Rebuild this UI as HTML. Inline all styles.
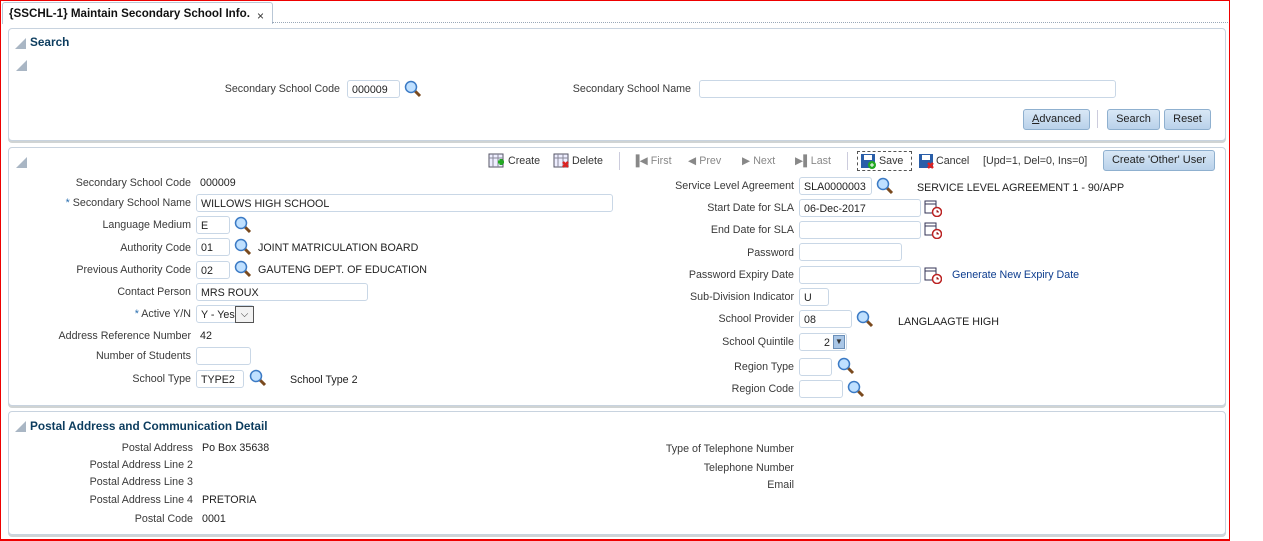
<!DOCTYPE html>
<html><head><meta charset="utf-8">
<style>
*{margin:0;padding:0;box-sizing:border-box}
body{width:1263px;height:541px;background:#fff;position:relative;overflow:hidden;font-family:"Liberation Sans",Tahoma,sans-serif;font-size:10.7px;color:#333}
.a{position:absolute;white-space:nowrap;line-height:16px}
.l{position:absolute;white-space:nowrap;line-height:16px;text-align:right;color:#3a3a3a}
.v{position:absolute;white-space:nowrap;line-height:16px;color:#222}
.in{position:absolute;height:18px;border:1px solid #c9d7e6;border-radius:3px;background:#fff;padding:2px 4px;line-height:14px;color:#222;white-space:nowrap;overflow:hidden}
.panel{position:absolute;border:1px solid #c8d3df;border-radius:4px;background:#fff;box-shadow:0 2px 0 #d0d4d4}
.tri{position:absolute;width:0;height:0;border-left:11px solid transparent;border-bottom:11px solid #a9b6c4}
.h{position:absolute;font-weight:bold;color:#0c3c5e;font-size:11.8px;line-height:16px}
.btn{position:absolute;height:21px;border:1px solid #8fb0cf;border-radius:3px;background:linear-gradient(#d9e8f6,#b9d1ea);text-align:center;line-height:19px;color:#222;font-size:11px}
.dis{color:#888}
.req{color:#2a6fb0}
</style></head><body>
<div style="position:absolute;left:0;top:0;width:1230px;height:541px;border:1px solid #e00;border-bottom:2px solid #e00"></div>
<div style="position:absolute;left:2px;top:2px;width:271px;height:22px;border:1px solid #b9c7d6;border-bottom:none;border-radius:3px 3px 0 0;background:#fff"></div>
<div style="position:absolute;left:272px;top:22px;width:956px;border-top:1px dotted #9aa8b8"></div>
<div class="a" style="left:9px;top:6px;font-weight:bold;font-size:11.6px;color:#111">{SSCHL-1} Maintain Secondary School Info.</div>
<div class="a" style="left:257px;top:8px;font-size:12px;color:#333">×</div>

<div class="panel" style="left:8px;top:28px;width:1218px;height:113px"></div>
<div class="tri" style="left:15px;top:38px"></div>
<div class="h" style="left:30px;top:34px">Search</div>
<div class="tri" style="left:16px;top:60px"></div>
<div class="l" style="right:923px;top:81px">Secondary School Code</div>
<div class="in" style="left:347px;top:80px;width:53px">000009</div>
<svg class="a" style="left:404px;top:80px" width="18" height="18" viewBox="0 0 18 18"><line x1="10" y1="10" x2="16" y2="16" stroke="#7a4a1e" stroke-width="3"/><circle cx="7" cy="7" r="5.5" fill="#bfe0ff" stroke="#3b7ac4" stroke-width="1.5"/></svg>
<div class="l" style="right:572px;top:81px">Secondary School Name</div>
<div class="in" style="left:699px;top:80px;width:417px"></div>
<div class="btn" style="left:1023px;top:109px;width:67px"><u>A</u>dvanced</div>
<div style="position:absolute;left:1097px;top:110px;height:18px;border-left:1px solid #ccd"></div>
<div class="btn" style="left:1107px;top:109px;width:53px">Search</div>
<div class="btn" style="left:1164px;top:109px;width:47px">Reset</div>

<div class="panel" style="left:8px;top:147px;width:1218px;height:259px"></div>
<div class="tri" style="left:16px;top:157px"></div>
<svg class="a" style="left:488px;top:153px" width="17" height="17"><rect x="1" y="1" width="14" height="13" fill="#eef" stroke="#556"/><path d="M1 5h14M5 1v13M10 1v13" stroke="#889"/><path d="M10 9h6M13 6v6" stroke="#2a2" stroke-width="3"/></svg>
<div class="a" style="left:508px;top:153px">Create</div>
<svg class="a" style="left:553px;top:153px" width="17" height="17"><rect x="1" y="1" width="14" height="13" fill="#eef" stroke="#556"/><path d="M1 5h14M5 1v13M10 1v13" stroke="#889"/><path d="M10 9l5 5M15 9l-5 5" stroke="#d22" stroke-width="2.5"/></svg>
<div class="a" style="left:572px;top:153px">Delete</div>
<div style="position:absolute;left:619px;top:152px;height:18px;border-left:1px solid #ccd"></div>
<div class="a dis" style="left:632px;top:153px">▐◀ First</div>
<div class="a dis" style="left:688px;top:153px">◀ Prev</div>
<div class="a dis" style="left:742px;top:153px">▶ Next</div>
<div class="a dis" style="left:795px;top:153px">▶▌Last</div>
<div style="position:absolute;left:847px;top:152px;height:18px;border-left:1px solid #ccd"></div>
<div style="position:absolute;left:857px;top:151px;width:55px;height:20px;border:1px dashed #555"></div>
<svg class="a" style="left:860px;top:153px" width="17" height="17"><rect x="1" y="1" width="14" height="14" fill="#2a5ea8"/><rect x="4" y="2" width="8" height="5" fill="#fff"/><circle cx="12" cy="12" r="4" fill="#2a2"/><path d="M10 12h4M12 10v4" stroke="#fff"/></svg>
<div class="a" style="left:879px;top:153px">Save</div>
<svg class="a" style="left:918px;top:153px" width="17" height="17"><rect x="1" y="1" width="14" height="14" fill="#2a5ea8"/><rect x="4" y="2" width="8" height="5" fill="#fff"/><path d="M10 10l5 5M15 10l-5 5" stroke="#d22" stroke-width="2.5"/></svg>
<div class="a" style="left:936px;top:153px">Cancel</div>
<div class="a" style="left:983px;top:153px">[Upd=1, Del=0, Ins=0]</div>
<div class="btn" style="left:1103px;top:150px;width:112px">Create 'Other' User</div>

<div class="l" style="right:1072px;top:175px">Secondary School Code</div><div class="v" style="left:200px;top:175px">000009</div>
<div class="l" style="right:1072px;top:195px"><span class="req">*</span> Secondary School Name</div><div class="in" style="left:196px;top:194px;width:417px">WILLOWS HIGH SCHOOL</div>
<div class="l" style="right:1072px;top:217px">Language Medium</div><div class="in" style="left:196px;top:216px;width:34px">E</div>
<div class="l" style="right:1072px;top:240px">Authority Code</div><div class="in" style="left:196px;top:238px;width:34px">01</div><div class="v" style="left:258px;top:240px">JOINT MATRICULATION BOARD</div>
<div class="l" style="right:1072px;top:262px">Previous Authority Code</div><div class="in" style="left:196px;top:261px;width:34px">02</div><div class="v" style="left:258px;top:262px">GAUTENG DEPT. OF EDUCATION</div>
<div class="l" style="right:1072px;top:284px">Contact Person</div><div class="in" style="left:196px;top:283px;width:172px">MRS ROUX</div>
<div class="l" style="right:1072px;top:306px"><span class="req">*</span> Active Y/N</div><div class="in" style="left:196px;top:305px;width:58px">Y - Yes</div>
<div style="position:absolute;left:235px;top:306px;width:19px;height:17px;border:1px solid #555;background:#f2f2f2;text-align:center;font-size:10px;line-height:15px">⌵</div>
<div class="l" style="right:1072px;top:328px">Address Reference Number</div><div class="v" style="left:200px;top:328px">42</div>
<div class="l" style="right:1072px;top:348px">Number of Students</div><div class="in" style="left:196px;top:347px;width:55px"></div>
<div class="l" style="right:1072px;top:371px">School Type</div><div class="in" style="left:196px;top:370px;width:48px">TYPE2</div><div class="v" style="left:290px;top:372px">School Type 2</div>

<div class="l" style="right:469px;top:178px">Service Level Agreement</div><div class="in" style="left:799px;top:177px;width:73px">SLA0000003</div><div class="v" style="left:917px;top:180px">SERVICE LEVEL AGREEMENT 1 - 90/APP</div>
<div class="l" style="right:469px;top:200px">Start Date for SLA</div><div class="in" style="left:799px;top:199px;width:122px">06-Dec-2017</div>
<div class="l" style="right:469px;top:222px">End Date for SLA</div><div class="in" style="left:799px;top:221px;width:122px"></div>
<div class="l" style="right:469px;top:245px">Password</div><div class="in" style="left:799px;top:243px;width:103px"></div>
<div class="l" style="right:469px;top:267px">Password Expiry Date</div><div class="in" style="left:799px;top:266px;width:122px"></div><div class="v" style="left:952px;top:267px;color:#0c3c8e">Generate New Expiry Date</div>
<div class="l" style="right:469px;top:289px">Sub-Division Indicator</div><div class="in" style="left:799px;top:288px;width:30px">U</div>
<div class="l" style="right:469px;top:311px">School Provider</div><div class="in" style="left:799px;top:310px;width:53px">08</div><div class="v" style="left:898px;top:314px">LANGLAAGTE HIGH</div>
<div class="l" style="right:469px;top:334px">School Quintile</div><div class="in" style="left:799px;top:333px;width:48px;text-align:right;padding-right:16px">2</div>
<div style="position:absolute;left:833px;top:335px;width:12px;height:14px;background:#a9c6e6;border:1px solid #6b8fb8;font-size:8px;line-height:12px;text-align:center">▼</div>
<div class="l" style="right:469px;top:359px">Region Type</div><div class="in" style="left:799px;top:358px;width:33px"></div>
<div class="l" style="right:469px;top:381px">Region Code</div><div class="in" style="left:799px;top:380px;width:44px"></div>

<svg width="0" height="0" style="position:absolute"><defs><g id="mg"><line x1="10" y1="10" x2="16" y2="16" stroke="#7a4a1e" stroke-width="3"/><circle cx="7" cy="7" r="5.5" fill="#bfe0ff" stroke="#3b7ac4" stroke-width="1.5"/></g></defs></svg>
<svg class="a" style="left:234px;top:216px" width="18" height="18"><use href="#mg"/></svg>
<svg class="a" style="left:234px;top:238px" width="18" height="18"><use href="#mg"/></svg>
<svg class="a" style="left:234px;top:260px" width="18" height="18"><use href="#mg"/></svg>
<svg class="a" style="left:249px;top:369px" width="18" height="18"><use href="#mg"/></svg>
<svg class="a" style="left:876px;top:177px" width="18" height="18"><use href="#mg"/></svg>
<svg class="a" style="left:856px;top:310px" width="18" height="18"><use href="#mg"/></svg>
<svg class="a" style="left:837px;top:357px" width="18" height="18"><use href="#mg"/></svg>
<svg class="a" style="left:847px;top:380px" width="18" height="18"><use href="#mg"/></svg>
<svg width="0" height="0" style="position:absolute"><defs><g id="cal"><rect x="1" y="2" width="11" height="12" fill="#fff" stroke="#335"/><path d="M1 5h11" stroke="#335"/><circle cx="13" cy="13" r="4.5" fill="#fff" stroke="#b22" stroke-width="1.5"/><path d="M13 11v2h2" stroke="#b22"/></g></defs></svg>
<svg class="a" style="left:924px;top:199px" width="18" height="18"><use href="#cal"/></svg>
<svg class="a" style="left:924px;top:221px" width="18" height="18"><use href="#cal"/></svg>
<svg class="a" style="left:924px;top:266px" width="18" height="18"><use href="#cal"/></svg>

<div class="panel" style="left:8px;top:411px;width:1218px;height:124px"></div>
<div class="tri" style="left:15px;top:421px"></div>
<div class="h" style="left:30px;top:418px">Postal Address and Communication Detail</div>
<div class="l" style="right:1070px;top:440px">Postal Address</div><div class="v" style="left:202px;top:440px">Po Box 35638</div>
<div class="l" style="right:1070px;top:457px">Postal Address Line 2</div>
<div class="l" style="right:1070px;top:474px">Postal Address Line 3</div>
<div class="l" style="right:1070px;top:492px">Postal Address Line 4</div><div class="v" style="left:202px;top:492px">PRETORIA</div>
<div class="l" style="right:1070px;top:511px">Postal Code</div><div class="v" style="left:202px;top:511px">0001</div>
<div class="l" style="right:469px;top:441px">Type of Telephone Number</div>
<div class="l" style="right:469px;top:460px">Telephone Number</div>
<div class="l" style="right:469px;top:477px">Email</div>
</body></html>
